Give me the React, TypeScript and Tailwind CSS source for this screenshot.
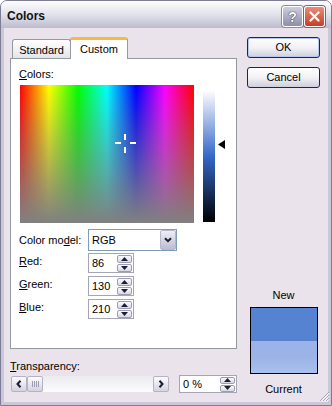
import React from 'react'

function SpinButtons({ h = 'h-[8px]' }: { h?: string }) {
  return (
    <div className="flex w-[15px] flex-col gap-[1px]">
      <div className={`flex ${h} items-center justify-center rounded-[2px] border border-[#9d9db2] bg-gradient-to-b from-[#fbfbfd] to-[#d9d8e4]`}>
        <svg width="7" height="4" viewBox="0 0 7 4">
          <polygon points="3.5,0 7,4 0,4" fill="#1d1d3a" />
        </svg>
      </div>
      <div className={`flex ${h} items-center justify-center rounded-[2px] border border-[#9d9db2] bg-gradient-to-b from-[#fbfbfd] to-[#d9d8e4]`}>
        <svg width="7" height="4" viewBox="0 0 7 4">
          <polygon points="0,0 7,0 3.5,4" fill="#1d1d3a" />
        </svg>
      </div>
    </div>
  )
}

function SpinBox({ value }: { value: string }) {
  return (
    <div className="flex h-[20px] w-[46px] items-center border border-[#a5a5b5] bg-white pl-[3px] pr-[1px]">
      <span className="flex-1">{value}</span>
      <SpinButtons />
    </div>
  )
}

function ScrollButton({ dir }: { dir: 'left' | 'right' }) {
  return (
    <div className="flex h-[16px] w-[16px] items-center justify-center rounded-[2px] border border-[#b4b3c6] bg-gradient-to-b from-[#fdfdfe] to-[#d3d2df]">
      <svg width="6" height="8" viewBox="0 0 6 8">
        {dir === 'left' ? (
          <polyline points="4.5,0.8 1.5,4 4.5,7.2" fill="none" stroke="#1a1a30" strokeWidth="2" />
        ) : (
          <polyline points="1.5,0.8 4.5,4 1.5,7.2" fill="none" stroke="#1a1a30" strokeWidth="2" />
        )}
      </svg>
    </div>
  )
}

function DialogButton({ label, isDefault }: { label: string; isDefault?: boolean }) {
  return (
    <div
      className={`flex h-[21px] w-[73px] items-center justify-center rounded-[3px] border border-[#0d2a66] bg-gradient-to-b from-white via-[#f2f2f6] to-[#cfcedc] ${
        isDefault ? 'shadow-[inset_0_0_0_1px_#b7c8ee]' : ''
      }`}
    >
      {label}
    </div>
  )
}

export default function App() {
  return (
    <div className="h-[406px] w-[332px] font-['Liberation_Sans',Arial,sans-serif] text-[11px] leading-[13px] text-black">
      <div className="flex h-full w-full flex-col overflow-hidden rounded-t-[7px] border border-[#7c7c94] bg-[#eae3eb]">
        {/* Title bar */}
        <div className="flex h-[27px] shrink-0 items-start bg-gradient-to-b from-[#fdfdfe] via-[#e2e2ec] to-[#bcbccf] pl-[6px] pr-[6px] pt-[5px]">
          <div className="flex h-[21px] flex-1 items-center text-[12px] font-bold text-[#111]">Colors</div>
          <div className="flex gap-[1px]">
            <div className="flex h-[21px] w-[21px] items-center justify-center rounded-[3px] border border-white bg-gradient-to-b from-[#cfcee0] to-[#8f8dab] shadow-[0_0_0_1px_#8a8aa2]">
              <span className="text-[14px] font-bold leading-[14px] text-white [text-shadow:0_0_1px_#222,0_0_1px_#222]">?</span>
            </div>
            <div className="flex h-[21px] w-[21px] items-center justify-center rounded-[3px] border border-white bg-gradient-to-b from-[#ec8a78] to-[#c43d28] shadow-[0_0_0_1px_#9a5a58]">
              <svg width="11" height="11" viewBox="0 0 11 11">
                <path d="M1.5 1.5 L9.5 9.5 M9.5 1.5 L1.5 9.5" stroke="white" strokeWidth="2.2" strokeLinecap="round" />
              </svg>
            </div>
          </div>
        </div>

        {/* Body */}
        <div className="relative flex flex-1 border-x-[3px] border-b-[3px] border-[#c9c7d8]">
          {/* Left column */}
          <div className="ml-[6px] flex w-[227px] flex-col pt-[9px]">
            {/* Tabs */}
            <div className="flex items-end pl-[2px]">
              <div className="flex h-[19px] w-[59px] justify-center rounded-t-[3px] border border-b-0 border-[#919b9c] bg-gradient-to-b from-white to-[#e4e4ec] pt-[4px]">
                Standard
              </div>
              <div className="relative z-10 -mb-px -ml-px flex h-[22px] w-[58px] justify-center rounded-t-[3px] border-x border-t-[3px] border-x-[#919b9c] border-t-[#f7b940] bg-white pt-[3px]">
                Custom
              </div>
            </div>

            {/* Panel */}
            <div className="flex h-[291px] flex-col border border-[#919b9c] bg-white pl-[8px] pt-[9px]">
              <div className="h-[13px]">
                <u>C</u>olors:
              </div>
              <div className="mt-[4px] flex items-start">
                <div className="relative ml-[1px] h-[138px] w-[174px] bg-[image:linear-gradient(to_bottom,rgba(128,128,128,0),rgb(128,128,128)),linear-gradient(to_right,#ff0000,#ffff00,#00ff00,#00ffff,#0000ff,#ff00ff,#ff0000)]">
                  <div className="absolute left-[95px] top-[57px] h-[2px] w-[6px] bg-white" />
                  <div className="absolute left-[110px] top-[57px] h-[2px] w-[6px] bg-white" />
                  <div className="absolute left-[104px] top-[49px] h-[6px] w-[2px] bg-white" />
                  <div className="absolute left-[104px] top-[62px] h-[6px] w-[2px] bg-white" />
                </div>
                <div className="ml-[9px] mt-[5px] h-[132px] w-[12px] bg-[image:linear-gradient(to_bottom,#ffffff,#3669c9_50%,#000000)]" />
                <svg className="ml-[3px] mt-[55px]" width="7" height="9" viewBox="0 0 7 9">
                  <polygon points="7,0 0,4.5 7,9" fill="#000" />
                </svg>
              </div>

              {/* Color model */}
              <div className="mt-[6px] flex items-center">
                <div className="w-[69px]">
                  Color mo<u>d</u>el:
                </div>
                <div className="flex h-[22px] w-[89px] items-center border border-[#7f9db9] bg-white pl-[3px]">
                  <span className="flex-1">RGB</span>
                  <div className="flex h-[20px] w-[16px] items-center justify-center rounded-[2px] border border-[#b7b6cc] bg-gradient-to-b from-[#eeeef5] to-[#bebdd2]">
                    <svg width="8" height="6" viewBox="0 0 8 6">
                      <polyline points="1,1.2 4,4.2 7,1.2" fill="none" stroke="#1b1b3c" strokeWidth="2" />
                    </svg>
                  </div>
                </div>
              </div>

              {/* RGB */}
              <div className="mt-[2px] flex items-start">
                <div className="w-[69px] pt-[2px]">
                  <u>R</u>ed:
                </div>
                <SpinBox value="86" />
              </div>
              <div className="mt-[3px] flex items-start">
                <div className="w-[69px] pt-[2px]">
                  <u>G</u>reen:
                </div>
                <SpinBox value="130" />
              </div>
              <div className="mt-[3px] flex items-start">
                <div className="w-[69px] pt-[2px]">
                  <u>B</u>lue:
                </div>
                <SpinBox value="210" />
              </div>
            </div>

            {/* Transparency */}
            <div className="mt-[11px] h-[13px]">
              <u>T</u>ransparency:
            </div>
            <div className="mt-[2px] flex items-center">
              <div className="ml-[1px] flex h-[16px] w-[158px]">
                <ScrollButton dir="left" />
                <div className="flex h-[16px] w-[16px] items-center justify-center gap-[1px] rounded-[2px] border border-[#b4b3c6] bg-gradient-to-b from-[#fdfdfe] to-[#d3d2df]">
                  <div className="h-[6px] w-[1px] bg-[#9c9cb2]" />
                  <div className="h-[6px] w-[1px] bg-[#9c9cb2]" />
                  <div className="h-[6px] w-[1px] bg-[#9c9cb2]" />
                  <div className="h-[6px] w-[1px] bg-[#9c9cb2]" />
                </div>
                <div className="flex-1 bg-gradient-to-b from-[#ebebf0] to-[#fcfcfd]" />
                <ScrollButton dir="right" />
              </div>
              <div className="ml-[10px] flex h-[18px] w-[58px] items-center border border-[#a5a5b5] bg-white pl-[3px] pr-[1px]">
                <span className="flex-1">0 %</span>
                <SpinButtons h="h-[7px]" />
              </div>
            </div>
          </div>

          {/* Right column */}
          <div className="ml-[10px] flex w-[73px] flex-col items-center pt-[9px]">
            <DialogButton label="OK" isDefault />
            <div className="mt-[9px]">
              <DialogButton label="Cancel" />
            </div>
            <div className="mt-[201px] h-[13px]">New</div>
            <div className="mt-[5px] flex h-[67px] w-[68px] flex-col border border-black">
              <div className="h-[33px] bg-[#5682d2]" />
              <div className="flex-1 bg-gradient-to-b from-[#9bb3e7] via-[#9bb3e7] to-[#a9c0ee]" />
            </div>
            <div className="mt-[9px] h-[13px]">Current</div>
          </div>

          {/* Resize grip */}
          <svg className="absolute bottom-0 right-[-2px]" width="11" height="11" viewBox="0 0 11 11">
            <path d="M10 1 L1 10 M10 4 L4 10 M10 7 L7 10" stroke="#a3a3b5" strokeWidth="1" />
            <path d="M10.5 2 L2 10.5 M10.5 5 L5 10.5 M10.5 8 L8 10.5" stroke="#ffffff" strokeWidth="1" />
          </svg>
        </div>
      </div>
    </div>
  )
}
